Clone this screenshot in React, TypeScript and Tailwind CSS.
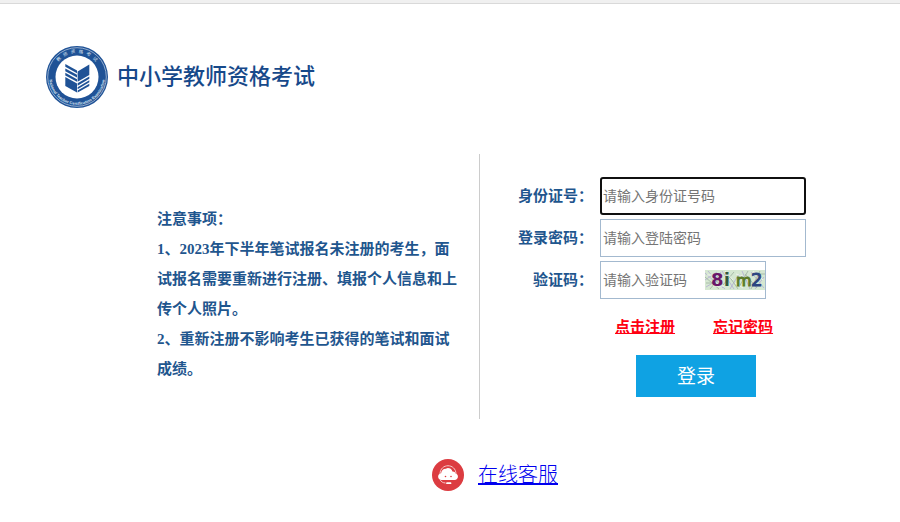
import { FormEvent, useState } from "react";

const inputClass =
  "h-[38px] border border-[#a3b9cf] bg-white pt-[2px] pl-[2px] text-sm text-gray-800 placeholder:text-[#757575] focus:rounded-[3px] focus:border-2 focus:border-[#101010] focus:pl-px focus:outline-none";
const labelClass = "w-[75px] text-right text-[15px] font-bold text-[#1f568e]";

const Logo = () => (
  <svg viewBox="0 0 62 62" className="h-[62px] w-[62px]" aria-hidden="true">
    <defs>
      <path id="ring-top" d="M7 31a24 24 0 0 1 48 0" />
      <path id="ring-bottom" d="M8.3 14.5A28 28 0 1 0 53.7 14.5" />
    </defs>
    <circle cx="31" cy="31" r="31" fill="#1f5296" />
    <circle cx="31" cy="31" r="29.3" fill="none" stroke="#c3d2e5" strokeWidth="0.7" />
    <circle cx="31" cy="31" r="21.5" fill="#fff" />
    <text fontSize="4.5" fill="#dbe5f1" textAnchor="middle" className="font-['Noto_Sans_CJK_SC',sans-serif]">
      <textPath href="#ring-top" startOffset="50%">教&#160;&#160; 师&#160;&#160; 资&#160;&#160; 格&#160;&#160; 考&#160;&#160; 试</textPath>
    </text>
    <text fontSize="4" fontWeight="bold" fill="#dbe5f1" textAnchor="middle" className="font-['Liberation_Sans',sans-serif]">
      <textPath href="#ring-bottom" startOffset="50%">National Teacher Certification Examination</textPath>
    </text>
    <g fill="#1f5296">
      <path d="M19.3 18 31 24.4v2.8L19.3 20.8z" />
      <path d="M19.3 22.4 31 28.8v2.8L19.3 25.2z" />
      <path d="M19.3 26.8 31 33.2v2.6L19.3 29.4z" />
      <path d="M19.3 31 31 37.4V46.5L19.3 40z" />
      <path d="M43.3 18.5 31.6 25.4v10.4l11.7-6.9z" />
      <path d="M43.3 30.4 31.6 37.3v2.4l11.7-6.9z" />
      <path d="M43.3 34.3 31.6 41.2v2l11.7-6.9z" />
      <path d="M43.3 37.7 31.6 44.6v1.9l11.7-6.6z" />
    </g>
  </svg>
);

const Captcha = () => (
  <svg viewBox="0 0 60 20" className="h-5 w-[60px]" role="img" aria-label="验证码">
    <rect width="60" height="20" fill="#d5e7d1" />
    <g fill="none" strokeWidth="1">
      <path d="M0 3l9 8 7-9M1 17l10-6 9 8M3 1l15 17M17 1l12 18M25 19l9-15 8 7M37 1l8 18M46 2l13 16M50 19l9-12M0 10l12-8" stroke="#b9b7d3" />
      <path d="M0 7l14 12M5 19L17 5M22 3l11 16M29 2L18 15M34 17l9-16M40 4l12 14M55 1l-9 18M53 4h7M1 13h8" stroke="#a9bcaa" />
      <path d="M2 5h7M20 1l8 9M30 13l8 5M48 1l10 9M8 16h11M31 4l7 2" stroke="#eef4e9" />
    </g>
    <g className="font-['DejaVu_Sans',sans-serif]">
      <text x="6" y="16" fontSize="18" fontWeight="bold" fill="#691668">8</text>
      <text x="19" y="16" fontSize="17" fontWeight="bold" fill="#31583d">i</text>
      <text x="31" y="16" fontSize="16" stroke="#5c7c28" strokeWidth="1" fill="#5c7c28">m</text>
      <text x="46" y="16" fontSize="18" stroke="#2d4580" strokeWidth="1" fill="#2d4580">2</text>
    </g>
  </svg>
);

const ServiceIcon = () => (
  <svg viewBox="0 0 32 32" className="h-8 w-8" aria-hidden="true">
    <circle cx="16" cy="16" r="16" fill="#dc3c41" />
    <path d="M8 15C8.2 4 23.8 4 24 15" fill="none" stroke="#f6c9c9" strokeWidth="1" />
    <path
      d="M9.5 21c-4.3 0-4.5-6.3-.4-6.7.2-3 2.4-4.8 4.9-4.6 1.3-1.3 5.8-.7 6.4 2.8 1.9-.1 2.8.7 3 2 3.6.6 3.5 6.5-.9 6.5z"
      fill="#fff"
    />
    <path d="M8.3 21c.8 1.7 2.6 2.9 5.2 3" fill="none" stroke="#f6c9c9" strokeWidth="1" />
    <path d="M15 24.2h3.5" fill="none" stroke="#fff" strokeWidth="1.8" strokeLinecap="round" />
    <circle cx="13.5" cy="17.5" r="0.8" fill="#dc3c41" />
    <circle cx="19" cy="17.5" r="0.8" fill="#dc3c41" />
  </svg>
);

const App = () => {
  const [idNumber, setIdNumber] = useState("");
  const [password, setPassword] = useState("");
  const [code, setCode] = useState("");

  const handleSubmit = (event: FormEvent<HTMLFormElement>) => {
    event.preventDefault();
  };

  return (
    <div className="min-h-screen bg-white font-['Liberation_Serif','Noto_Sans_CJK_SC',sans-serif]">
      <div className="h-1 border-b border-[#d9d9d9] bg-[#f0f0f0]" />

      <header className="flex items-center gap-[9px] px-[46px] pt-[42px]">
        <Logo />
        <h1 className="text-[22px] leading-8 font-medium text-[#17498a]">中小学教师资格考试</h1>
      </header>

      <main className="mt-[46px] grid grid-cols-[8fr_7fr]">
        <section className="flex min-h-[265px] justify-end border-r border-[#cccccc] pt-[50px] pr-[18px]">
          <div className="w-[304px] text-[15px] leading-[30px] font-bold text-[#1f568e]">
            <h2>注意事项：</h2>
            <p>1、2023年下半年笔试报名未注册的考生，面试报名需要重新进行注册、填报个人信息和上传个人照片。</p>
            <p>2、重新注册不影响考生已获得的笔试和面试成绩。</p>
          </div>
        </section>

        <form onSubmit={handleSubmit} className="flex flex-col items-start gap-1 pt-[23px] pl-[38px]">
          <div className="flex items-center gap-[7px]">
            <label htmlFor="id-number" className={labelClass}>身份证号：</label>
            <input
              id="id-number"
              type="text"
              autoFocus
              value={idNumber}
              onChange={(event) => setIdNumber(event.target.value)}
              className={`${inputClass} w-[206px]`}
              placeholder="请输入身份证号码"
            />
          </div>
          <div className="flex items-center gap-[7px]">
            <label htmlFor="password" className={labelClass}>登录密码：</label>
            <input
              id="password"
              type="password"
              value={password}
              onChange={(event) => setPassword(event.target.value)}
              className={`${inputClass} w-[206px]`}
              placeholder="请输入登陆密码"
            />
          </div>
          <div className="flex items-center gap-[7px]">
            <label htmlFor="code" className={labelClass}>验证码：</label>
            <div className="relative">
              <input
                id="code"
                type="text"
                value={code}
                onChange={(event) => setCode(event.target.value)}
                className={`${inputClass} w-[166px] pr-[62px]`}
                placeholder="请输入验证码"
              />
              <div className="absolute top-[9px] right-px">
                <Captcha />
              </div>
            </div>
          </div>

          <div className="ml-[97px] flex gap-[38px] pt-[13px] text-[15px] leading-[22px] font-bold text-[#ff0011] underline">
            <a href="#register">点击注册</a>
            <a href="#forgot">忘记密码</a>
          </div>
          <button type="submit" className="mt-[13px] ml-[118px] h-[42px] w-[120px] bg-[#0fa2e3] pt-[2px] text-[19px] text-white">
            登录
          </button>
        </form>
      </main>

      <footer className="mt-10 flex items-center justify-center gap-[14px] pl-[90px]">
        <ServiceIcon />
        <a href="#service" className="text-xl font-light text-[#0000ee] underline">在线客服</a>
      </footer>
    </div>
  );
};

export default App;
